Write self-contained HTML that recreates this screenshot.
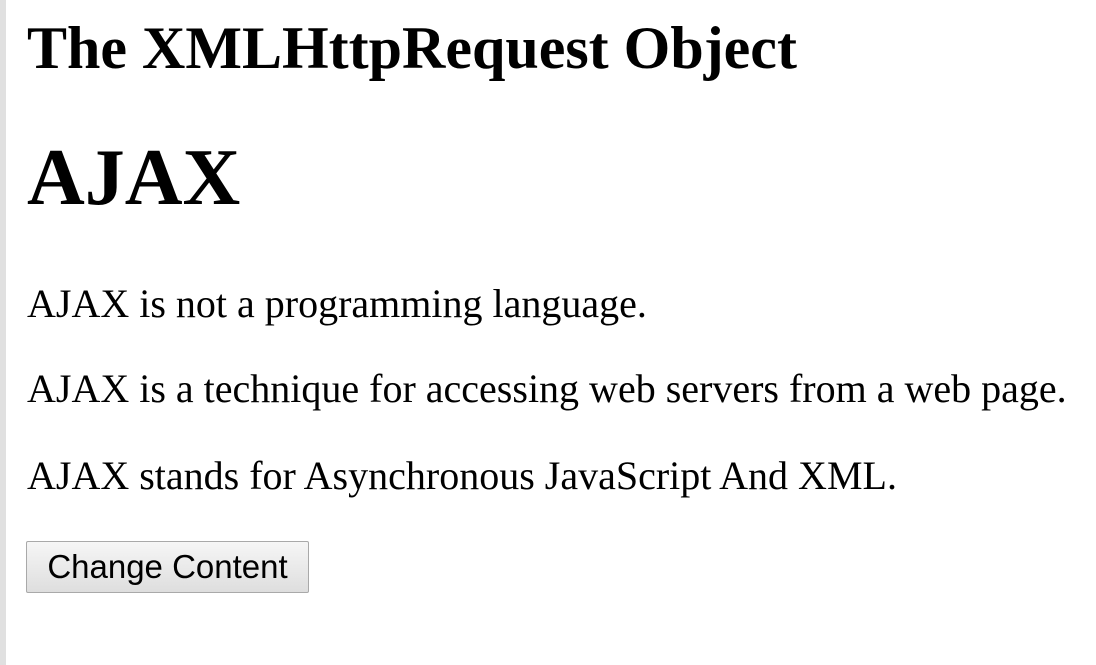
<!DOCTYPE html>
<html><head><style>
html,body{margin:0;padding:0;background:#fff;width:1096px;height:665px;overflow:hidden;position:relative}
.bar{position:absolute;left:0;top:0;width:6px;height:665px;background:#e0e0e0}
.t{position:absolute;left:27px;line-height:1;font-family:"Liberation Serif",serif;color:#000;white-space:nowrap;margin:0}
.b{font-weight:bold}
button{position:absolute;left:26px;top:541px;width:283px;height:52px;border:1px solid #a9a9a9;border-radius:2px;background:linear-gradient(#f6f6f6,#dedede);font-family:"Liberation Sans",sans-serif;font-size:33px;color:#000;padding:0}
</style></head><body>
<div class="bar"></div>
<div class="t b" style="top:18px;font-size:60px">The XMLHttpRequest Object</div>
<div class="t b" style="top:138px;font-size:80px">AJAX</div>
<div class="t" style="top:284px;font-size:40px">AJAX is not a programming language.</div>
<div class="t" style="top:369px;font-size:40px">AJAX is a technique for accessing web servers from a web page.</div>
<div class="t" style="top:456px;font-size:40px">AJAX stands for Asynchronous JavaScript And XML.</div>
<button>Change Content</button>
</body></html>
